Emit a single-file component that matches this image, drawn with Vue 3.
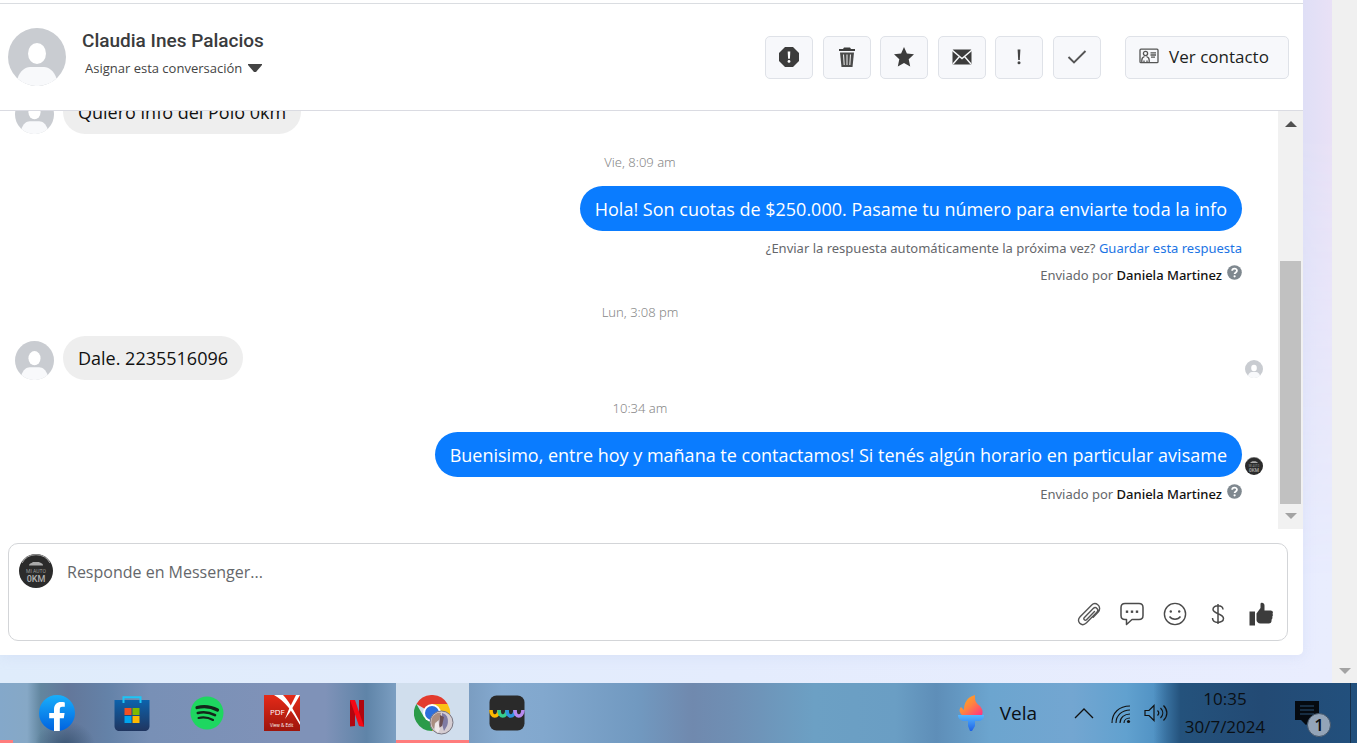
<script setup>
import { h, ref } from 'vue'

const reply = ref('')

const Person = () =>
  h('svg', { viewBox: '0 0 58 58', 'aria-hidden': 'true', class: 'person' }, [
    h('circle', { cx: 29, cy: 29, r: 29, fill: '#c9ccd1' }),
    h('ellipse', { cx: 29, cy: 25.5, rx: 9, ry: 10.5, fill: '#fff' }),
    h('path', { d: 'M9.5 50.5C12 43 17 39 22 39h14c5 0 10 4 12.500 11.500A29 29 0 0 1 9.500 50.500z', fill: '#f8f9fb' }),
  ])

const Brand = () =>
  h('svg', { viewBox: '0 0 34 34', 'aria-hidden': 'true', class: 'brand' }, [
    h('circle', { cx: 17, cy: 17, r: 17, fill: '#2b2b2b' }),
    h('path', { d: 'M3 9A16 16 0 0 1 31 9', fill: 'none', stroke: '#c9c9c9', 'stroke-width': 0.8 }),
    h('path', { d: 'M10 11.500c0-2 2-2 4-3.500h6c2 1.500 4 1 4 3.500z', fill: '#aaa' }),
    h('text', { x: 17, y: 18.5, 'text-anchor': 'middle', 'font-size': 5, fill: '#999', 'font-family': 'Roboto, sans-serif' }, 'MI AUTO'),
    h('text', { x: 17, y: 28, 'text-anchor': 'middle', 'font-size': 9, 'font-weight': 500, fill: '#b0b0b0', 'font-family': 'Roboto, sans-serif' }, '0KM'),
  ])

const Help = () =>
  h('svg', { viewBox: '0 0 16 16', 'aria-hidden': 'true', class: 'help' }, [
    h('circle', { cx: 8, cy: 8, r: 7.8, fill: '#7f888f' }),
    h('path', { d: 'M5.500 6.200C5.500 3.200 10.600 3.200 10.600 6c0 1.900-2.500 1.900-2.500 3.700', fill: 'none', stroke: '#fff', 'stroke-width': 1.9 }),
    h('circle', { cx: 8.1, cy: 12, r: 1.2, fill: '#fff' }),
  ])
</script>

<template>
  <div class="screen">
    <div class="browser">
      <div class="page">
        <main class="panel">
          <header class="head">
            <Person />
            <div class="who">
              <h1>Claudia Ines Palacios</h1>
              <button class="assign">
                Asignar esta conversación
                <svg viewBox="0 0 14 8" width="14" height="8"><path d="M0 0h14v1L8 8H6L0 1z" fill="#444" /></svg>
              </button>
            </div>
            <div class="actions">
              <button aria-label="Spam">
                <svg viewBox="0 0 20 20"><path d="M6 0h8l6 6v8l-6 6H6l-6-6V6z" fill="#3c3c3c" /><path d="M8.700 4.500h2.600l-.4 7.300H9.100z" fill="#fff" /><circle cx="10" cy="14.400" r="1.400" fill="#fff" /></svg>
              </button>
              <button aria-label="Eliminar">
                <svg viewBox="0 0 20 20"><path d="M7 .500h6l1 1.500h4V4H2V2h4z" fill="#3c3c3c" /><path d="M3 5.500h14L15.500 20h-11z" fill="#4a4a4a" /><path d="M6.500 7.500l.7 10.500M10 7.500V18M13.500 7.500L12.800 18" stroke="#e4e4e4" stroke-width="1.100" /></svg>
              </button>
              <button aria-label="Destacar">
                <svg viewBox="0 0 20 20"><path d="M10 0l2.900 6.600 7.100.6-5.300 5 1.500 7.400L10 15.900 3.800 19.600l1.500-7.400L0 7.200l7.100-.6z" fill="#3c3c3c" /></svg>
              </button>
              <button aria-label="Marcar como no leído">
                <svg viewBox="0 0 20 20"><rect x=".5" y="2.500" width="19" height="15" rx="1" fill="#3c3c3c" /><path d="M0 3l10 8.500L20 3M1 17l6.500-7.500M19 17l-6.500-7.500" stroke="#f7f8fa" stroke-width="1.400" fill="none" /></svg>
              </button>
              <button aria-label="Seguimiento">
                <svg viewBox="0 0 20 20"><path d="M8.600 2.500h2.800l-.6 10.500H9.200z" fill="#444" /><circle cx="10" cy="15.700" r="1.500" fill="#444" /></svg>
              </button>
              <button aria-label="Marcar como listo">
                <svg viewBox="0 0 20 20"><path d="M1.500 10l5.500 5.500L18.500 4" fill="none" stroke="#555" stroke-width="1.900" /></svg>
              </button>
            </div>
            <button class="contact">
              <svg viewBox="0 0 20 16" width="20" height="16" fill="none" stroke="#555" stroke-width="1.300">
                <rect x="1" y="1.200" width="18" height="13.500" rx="1" /><circle cx="6.500" cy="5.500" r="2.100" /><path d="M2.800 14.500v-2.300c0-2 1.500-3.300 2.700-3.700M10.200 14.500v-2.300c0-2-1.500-3.300-2.700-3.700M5 12.500v2M8 12.500v2M11.500 4.800H17M11.500 7h5.500M12 9.200h4" />
              </svg>
              Ver contacto
            </button>
          </header>

          <section class="chat">
            <div class="messages">
              <div class="row in"><Person /><p class="bubble">Quiero info del Polo 0km</p></div>
              <time>Vie, 8:09 am</time>
              <div class="row out"><p class="bubble">Hola! Son cuotas de $250.000. Pasame tu número para enviarte toda la info</p></div>
              <p class="note first">¿Enviar la respuesta automáticamente la próxima vez?&nbsp;<a href="#">Guardar esta respuesta</a></p>
              <p class="note">Enviado por&nbsp;<b>Daniela Martinez</b><Help /></p>
              <time class="short">Lun, 3:08 pm</time>
              <div class="row in"><Person /><p class="bubble">Dale. 2235516096</p><span class="seen"><Person /></span></div>
              <time>10:34 am</time>
              <div class="row out"><p class="bubble">Buenisimo, entre hoy y mañana te contactamos! Si tenés algún horario en particular avisame</p><span class="seen"><Brand /></span></div>
              <p class="note first">Enviado por&nbsp;<b>Daniela Martinez</b><Help /></p>
            </div>
            <div class="bar">
              <svg viewBox="0 0 12 6" width="12" height="6"><path d="M6 0l6 6H0z" fill="#505050" /></svg>
              <div class="track"><div class="thumb"></div></div>
              <svg viewBox="0 0 12 6" width="12" height="6"><path d="M0 0h12L6 6z" fill="#a3a3a3" /></svg>
            </div>
          </section>

          <form class="composer" @submit.prevent>
            <div class="write">
              <Brand />
              <textarea v-model="reply" rows="1" aria-label="Responde en Messenger" placeholder="Responde en Messenger..."></textarea>
            </div>
            <div class="tools">
              <button type="button" aria-label="Adjuntar archivo">
                <svg viewBox="0 0 24 24" fill="none" stroke="#555" stroke-width="1.400" stroke-linecap="round"><path d="M17.500 9.500l-8 8.200c-1.500 1.500-3.600-.6-2.100-2.100l8.800-9c2.600-2.600 6.200 1 3.600 3.600L9.500 20.800c-4.800 4.600-11-1.400-6.400-6L14.500 3.200c1.800-1.800 4.400-2 6.300-.4 2.300 1.900 2.400 5.100.4 7.200l-5 5.200" /></svg>
              </button>
              <button type="button" aria-label="Respuestas guardadas">
                <svg viewBox="0 0 24 24" fill="none" stroke="#4a4a4a" stroke-width="1.500" stroke-linejoin="round"><path d="M5 1.500h14c2.500 0 4 1.500 4 4v8c0 2.500-1.500 4-4 4h-7L6.500 22.500v-5H5c-2.500 0-4-1.500-4-4v-8c0-2.500 1.500-4 4-4z" /><g fill="#4a4a4a" stroke="none"><rect x="5.800" y="8.500" width="2.400" height="2.400" /><rect x="10.800" y="8.500" width="2.400" height="2.400" /><rect x="15.800" y="8.500" width="2.400" height="2.400" /></g></svg>
              </button>
              <button type="button" aria-label="Emoji">
                <svg viewBox="0 0 24 24" fill="none" stroke="#4a4a4a" stroke-width="1.400"><circle cx="12" cy="12" r="10.600" /><path d="M6.500 14.500c2.500 3.600 8.500 3.600 11 0" /><circle cx="7.800" cy="9.500" r="1.200" fill="#4a4a4a" stroke="none" /><circle cx="16.200" cy="9.500" r="1.200" fill="#4a4a4a" stroke="none" /></svg>
              </button>
              <button type="button" aria-label="Pagos">
                <svg viewBox="0 0 24 24" fill="none" stroke="#4a4a4a" stroke-width="1.500"><path d="M17 7.500c0-5-10-5.200-10-.2 0 4.700 10.500 4.200 10.500 9.200 0 5.300-11 5.300-11-.5M12 2v20" /></svg>
              </button>
              <button type="button" aria-label="Me gusta">
                <svg viewBox="0 0 24 24" fill="#3c3c3c"><path d="M.5 9.500h5.500v14H.5zM7.500 11.500l4-5.500V2c0-2 4-2 4 1.500V8.500h6c2.200 0 3 1.800 2 3.200.6 1 .5 2.300-.3 3 .5 1.200.2 2.400-.7 3 .3 2-.7 3.800-2.700 3.800h-8.300c-2.500 0-4-2-4-3.500z" /></svg>
              </button>
            </div>
          </form>
        </main>
      </div>
      <div class="outer">
        <svg viewBox="0 0 12 6" width="12" height="6"><path d="M0 0h12L6 6z" fill="#a3a3a3" /></svg>
      </div>
    </div>

    <footer class="taskbar">
      <nav class="apps">
        <button aria-label="Facebook">
          <svg viewBox="0 0 36 36"><defs><linearGradient id="fb" x2="0" y2="1"><stop stop-color="#19affb" /><stop offset="1" stop-color="#0062e0" /></linearGradient></defs><circle cx="18" cy="18" r="18" fill="url(#fb)" /><path d="M15 36V23.200h-4.800V18H15v-3.500C15 9.500 18 7 22 7c1.500 0 2.800.2 3.800.4v4.400h-2.600c-2 0-2.400 1.200-2.400 2.700V18h4.800l-.8 5.200h-4V36z" fill="#fff" /></svg>
        </button>
        <button aria-label="Microsoft Store">
          <svg viewBox="0 0 36 36"><defs><linearGradient id="ms" x2="0" y2="1"><stop stop-color="#0d62ac" /><stop offset="1" stop-color="#20355f" /></linearGradient></defs><path d="M.5 5h35v26c0 3-2 5-5 5h-25c-3 0-5-2-5-5z" fill="url(#ms)" /><path d="M9.500 8V2.200h17V8" fill="none" stroke="#1cc5f6" stroke-width="2" /><path d="M10.500 13h7v7h-7z" fill="#f25022" /><path d="M18.500 13h7v7h-7z" fill="#7fba00" /><path d="M10.500 21h7v7h-7z" fill="#00a4ef" /><path d="M18.500 21h7v7h-7z" fill="#ffb900" /></svg>
        </button>
        <button aria-label="Spotify">
          <svg viewBox="0 0 36 36"><circle cx="18" cy="18" r="16.500" fill="#1ed760" /><g fill="none" stroke="#14251a" stroke-linecap="round"><path d="M8 12.500c7-1.800 14-1 20.500 2.500" stroke-width="3.200" /><path d="M8.800 18c6-1.500 11.500-.8 17.200 2.200" stroke-width="2.600" /><path d="M9.500 23c5-1.200 10-.5 14.500 2" stroke-width="2.100" /></g></svg>
        </button>
        <button aria-label="PDF X">
          <svg viewBox="0 0 36 36"><defs><linearGradient id="pdf" x2="0" y2="1"><stop stop-color="#e52a18" /><stop offset="1" stop-color="#9d150c" /></linearGradient></defs><path d="M0 0h36v36H0z" fill="url(#pdf)" /><path d="M10 0h9c5 5 9 12 17 27v3C28 16 21 6 10 0z" fill="#fff" /><path d="M36 0h-4l-7 14-4 10 5-7z" fill="#fff" /><text x="6" y="20" font-size="8" fill="#fff">PDF</text><text x="6" y="32" font-size="4.500" fill="#fff">View &amp; Edit</text></svg>
        </button>
        <button aria-label="Netflix">
          <svg viewBox="0 0 36 36"><path d="M11 5h5v26l-5 .5zM20 5h5v26.500l-5-.5z" fill="#b1060f" /><path d="M11 5h5l9 26.500-5-.5z" fill="#f50914" /></svg>
        </button>
        <button class="active" aria-label="Google Chrome">
          <svg viewBox="0 0 40 40"><path d="M2.400 9A18 18 0 0 1 33.600 9L18 18z" fill="#e33b2e" /><path d="M33.600 9A18 18 0 0 1 18 36L18 9z" fill="#fbc116" /><path d="M2.400 9A18 18 0 0 0 18 36l8-13.500L10 22z" fill="#2a9b49" /><circle cx="18" cy="18" r="9" fill="#fff" /><circle cx="18" cy="18" r="7" fill="#2d6fdc" /><circle cx="27.500" cy="27.500" r="11.500" fill="#d5cdd2" stroke="#77747f" /><path d="M18 23c2-4 6-6 9-5l-2 7-4 3-1 6c-3-3-3-7-2-11z" fill="#a98d80" /><path d="M28 18c6 1 7 8 5 13l-3 5-2-7z" fill="#7f7ba3" /><path d="M26 20l4 2-2 9-3 2z" fill="#6b4f52" /><path d="M21 29l3-3 2 8-2 4-3-3z" fill="#efe8ea" /></svg>
        </button>
        <button aria-label="Wavebox">
          <svg viewBox="0 0 36 36"><rect x=".5" y=".5" width="35" height="35" rx="7" fill="#2a2a2a" /><g fill="none" stroke-width="3.600"><path d="M2 15c0 8 7.500 8 8 0" stroke="#fcb900" /><path d="M10 15c0 8 7.500 8 8 0" stroke="#35cf8f" /><path d="M18 15c0 8 7.500 8 8 0" stroke="#2f93dc" /><path d="M26 15c0 8 7.500 8 8 0" stroke="#b78af0" /></g></svg>
        </button>
      </nav>
      <div class="tray">
        <button class="vela">
          <svg viewBox="0 0 28 36" width="28" height="36"><defs><linearGradient id="fl" x2="1" y2="1"><stop stop-color="#fbb516" /><stop offset=".5" stop-color="#ff8340" /><stop offset="1" stop-color="#ff2f86" /></linearGradient><linearGradient id="to" x2="0" y2="1"><stop stop-color="#55b7ff" /><stop offset="1" stop-color="#1e62e6" /></linearGradient></defs><path d="M5 20C2 17 2 14 4 12l3 3C7 8 10 2 18 0c0 6 0 7 5 11 3 4 3 6 2 9z" fill="url(#fl)" /><path d="M1 20h26c0 4-2 6-7 6h-2v5l-3 5h-2l-2-5v-5H9c-5 0-8-2-8-6z" fill="url(#to)" /></svg>
          Vela
        </button>
        <button class="mini" aria-label="Mostrar iconos ocultos"><svg viewBox="0 0 24 24"><path d="M3 17l9-9 9 9" fill="none" stroke="#111" stroke-width="1.300" /></svg></button>
        <button class="mini" aria-label="Wi-Fi"><svg viewBox="0 0 24 24" fill="none" stroke="#111" stroke-width="1.100"><path d="M4 22C4 12 11 5 22 5M8 22C8 14.500 14 9 22 9M12 22c0-5.500 4.500-9 10-9M16 22c0-3 2.500-5 6-5" /><circle cx="20.500" cy="20.500" r="1.600" fill="#111" stroke="none" /></svg></button>
        <button class="mini" aria-label="Volumen"><svg viewBox="0 0 24 24" fill="none" stroke="#111" stroke-width="1.200"><path d="M1 9.500h4l5-5v15l-5-5H1zM13.500 9.500c1.500 1.500 1.500 3.500 0 5M16.500 7c3 3 3 7 0 10M19.500 4.500c4.500 4.500 4.500 10.500 0 15" /></svg></button>
        <div class="clock"><span>10:35</span><span>30/7/2024</span></div>
        <button class="bell" aria-label="Notificaciones">
          <svg viewBox="0 0 24 24" width="24" height="24"><path d="M0 0h24v19H16l-5 5-5-5H0z" fill="#050a10" /><path d="M5 5h14M5 9h14M5 13h14" stroke="#2b5075" /></svg>
          <span class="count">1</span>
        </button>
        <div class="desk"></div>
      </div>
    </footer>
  </div>
</template>

<style>
html, body { margin: 0; overflow: hidden; }
</style>

<style scoped>
* { box-sizing: border-box; }
p, h1 { margin: 0; }
svg { display: block; flex: none; }
button { font: inherit; color: inherit; padding: 0; border: 0; background: none; }
.screen { height: 100vh; display: flex; flex-direction: column; font-family: "Open Sans", "Noto Sans", sans-serif; color: #1c1e21; }
.browser { flex: 1; min-height: 0; display: flex; }
.page { flex: 1; min-width: 0; padding: 0 29px 28px 0; background: linear-gradient(90deg, #dfecfb 0%, #e4ecfd 55%, #e9edfe 100%); position: relative; }
.page::before { content: ""; position: absolute; inset: 0 0 0 auto; width: 29px; background: linear-gradient(90deg, #dfdff6, #e9e1f6); mask-image: linear-gradient(#000 20%, transparent 85%); }
.panel { height: 100%; display: flex; flex-direction: column; background: #fff; border-radius: 0 0 5px 0; padding-top: 3px; box-shadow: 0 2px 12px #c8d3f066; }
.head { flex: none; height: 108px; border-top: 1px solid #dadde1; border-bottom: 1px solid #dadbe2; display: flex; align-items: center; padding: 0 14px 0 8px; }
.head > .person { width: 58px; height: 58px; }
.who { margin: 0 auto 0 16px; display: flex; flex-direction: column; align-items: flex-start; padding-bottom: 4px; }
.who h1 { font: 500 19px/26px Roboto, sans-serif; color: #3a3b3d; }
.assign { display: flex; align-items: center; gap: 6px; margin-left: 3px; font-size: 13px; line-height: 28px; color: #444; }
.actions { width: 336px; display: flex; justify-content: space-between; }
.actions button, .contact { height: 43px; border: 1px solid #dfe2e8; border-radius: 5px; background: #f7f8fb; display: flex; align-items: center; justify-content: center; }
.actions button { width: 48px; }
.actions svg { width: 20px; height: 20px; }
.contact { margin-left: 24px; width: 164px; gap: 10px; font-size: 17px; padding: 0 6px 2px 0; }
.chat { flex: 1; min-height: 0; display: flex; }
.messages { flex: 1; min-width: 0; overflow: hidden; display: flex; flex-direction: column; justify-content: flex-end; padding: 0 36px 22px 15px; }
.messages > * { flex: none; }
.row { display: flex; align-items: flex-end; position: relative; }
.row.out { justify-content: flex-end; }
.in > .person { width: 39px; height: 39px; }
.bubble { font-size: 18px; line-height: 24px; padding: 10px 15px; border-radius: 23px; white-space: nowrap; }
.in .bubble { margin-left: 9px; background: #eee; color: #111; }
.out .bubble { background: #0a7cff; color: #fff; line-height: 25px; padding: 11px 15px 9px; }
.seen { position: absolute; right: -21px; bottom: 2px; }
.seen svg { width: 18px; height: 18px; }
time { height: 52px; padding-top: 4px; margin-right: -23px; display: flex; align-items: center; justify-content: center; font: 300 13px "Noto Sans", sans-serif; color: #888; }
time.short { height: 48px; padding-top: 0; }
.note { height: 27px; display: flex; align-items: center; justify-content: flex-end; font-family: "Noto Sans", sans-serif; font-size: 13px; color: #65676b; }
.note.first { margin-top: 3px; }
.note a { color: #1b74e4; text-decoration: none; }
.note b { font-weight: 500; color: #111; }
.help { width: 15px; height: 15px; margin: 0 0 4px 5px; }
.bar { width: 25px; background: #f1f1f1; display: flex; flex-direction: column; align-items: center; padding: 10px 0; }
.track { flex: 1; width: 21px; margin: 9px 0; display: flex; flex-direction: column; justify-content: flex-end; }
.thumb { height: 66%; background: #c1c1c1; }
.composer { flex: none; margin: 14px 15px 14px 8px; height: 98px; border: 1px solid #d3d5d8; border-radius: 10px; padding: 10px; display: flex; flex-direction: column; justify-content: space-between; }
.write { display: flex; align-items: flex-start; gap: 14px; }
.write .brand { width: 34px; height: 34px; }
textarea { flex: 1; height: 36px; border: 0; outline: 0; padding: 4px 0; resize: none; font: 16px/28px "Open Sans", "Noto Sans", sans-serif; background: none; }
textarea::placeholder { color: #65676b; opacity: 1; }
.tools { display: flex; justify-content: flex-end; gap: 11px; }
.tools button { width: 32px; height: 32px; display: grid; place-items: center; }
.tools svg { width: 24px; height: 24px; }
.outer { width: 25px; background: #f0f0f0; display: flex; align-items: flex-end; justify-content: center; padding-bottom: 9px; }
.taskbar { flex: none; height: 60px; display: flex; justify-content: space-between; color: #0a0f14; background:
  radial-gradient(ellipse 30px 24px at 65px 62px, #34506dcc, transparent),
  linear-gradient(90deg, transparent 85%, #24527c 87%, #234a74 93%, #22507d 100%),
  linear-gradient(90deg, #84a8ca 0, #86a8c6 2%, #62869f 3%, #63779a 5%, #6482a8 8%, #7890b6 11%, #7f92b8 20%, #7f92b8 24%, #5f84a8 27%, #86a8cb 30%, #7495b8 33%, #85aad0 37%, #82a8ce 40%, #7199c0 47%, #7089ae 51%, #6f8fb4 54%, #6ca0c4 60%, #6a9ec4 66%, #5e8eb8 69%, #6ca5cf 73%, #73a6d1 79%, #61a1cf 83%, #4b8dc0 86%, #4b8dc0 100%); }
.apps { display: flex; gap: 2px; padding-left: 21px; position: relative; }
.apps::before { content: ""; position: absolute; left: 0; bottom: 0; width: 13px; height: 3px; background: #ff7c7c; }
.apps button { width: 73px; display: grid; place-items: center; font-family: "Open Sans", sans-serif; border-bottom: 3px solid transparent; padding: 3px 2px 0 0; }
.apps svg { width: 36px; height: 36px; }
.apps .active { background: #d0deed; background-clip: padding-box; border-bottom-color: #ff7c7c; }
.apps .active svg { width: 40px; height: 40px; margin: 3px 0 0 5px; }
.tray { display: flex; align-items: center; }
.tray svg { flex: none; }
.vela { display: flex; align-items: center; gap: 15px; font-size: 19px; margin-right: 35px; }
.mini { width: 24px; margin-right: 12px; }
.mini svg { width: 24px; height: 24px; }
.clock { width: 90px; display: flex; flex-direction: column; align-items: center; font-size: 17px; line-height: 28px; }
.bell { position: relative; margin: 0 31px 0 25px; }
.count { position: absolute; left: 12px; top: 12px; width: 24px; height: 24px; border-radius: 12px; background: #93a4b8; border: 1px solid #44566a; font-size: 17px; font-weight: 600; line-height: 22px; text-align: center; }
.desk { width: 7px; align-self: stretch; border-left: 1px solid #152f4a; }
</style>
